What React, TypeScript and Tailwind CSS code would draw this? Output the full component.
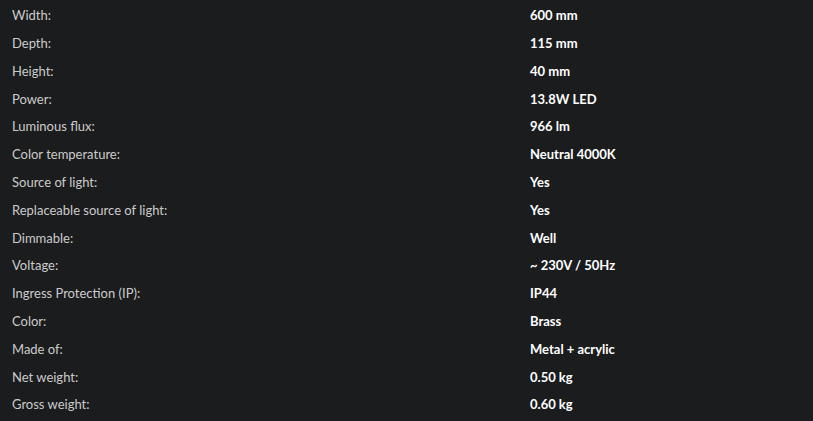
import React from "react";

const specs: [string, string][] = [
  ["Width:", "600 mm"],
  ["Depth:", "115 mm"],
  ["Height:", "40 mm"],
  ["Power:", "13.8W LED"],
  ["Luminous flux:", "966 lm"],
  ["Color temperature:", "Neutral 4000K"],
  ["Source of light:", "Yes"],
  ["Replaceable source of light:", "Yes"],
  ["Dimmable:", "Well"],
  ["Voltage:", "~ 230V / 50Hz"],
  ["Ingress Protection (IP):", "IP44"],
  ["Color:", "Brass"],
  ["Made of:", "Metal + acrylic"],
  ["Net weight:", "0.50 kg"],
  ["Gross weight:", "0.60 kg"],
];

export default function App() {
  return (
    <div
      className="w-[813px] h-[421px] bg-[#1b1c1e] pt-[2px] overflow-hidden"
      style={{ fontFamily: "Lato, 'Open Sans', sans-serif" }}
    >
      <table className="w-full border-collapse text-[13px]">
        <tbody>
          {specs.map(([label, value]) => (
            <tr key={label} className="h-[27.8px]">
              <td className="w-[530px] pl-3 text-[#cbcbcb] align-middle">{label}</td>
              <td className="font-bold text-white align-middle">{value}</td>
            </tr>
          ))}
        </tbody>
      </table>
    </div>
  );
}
